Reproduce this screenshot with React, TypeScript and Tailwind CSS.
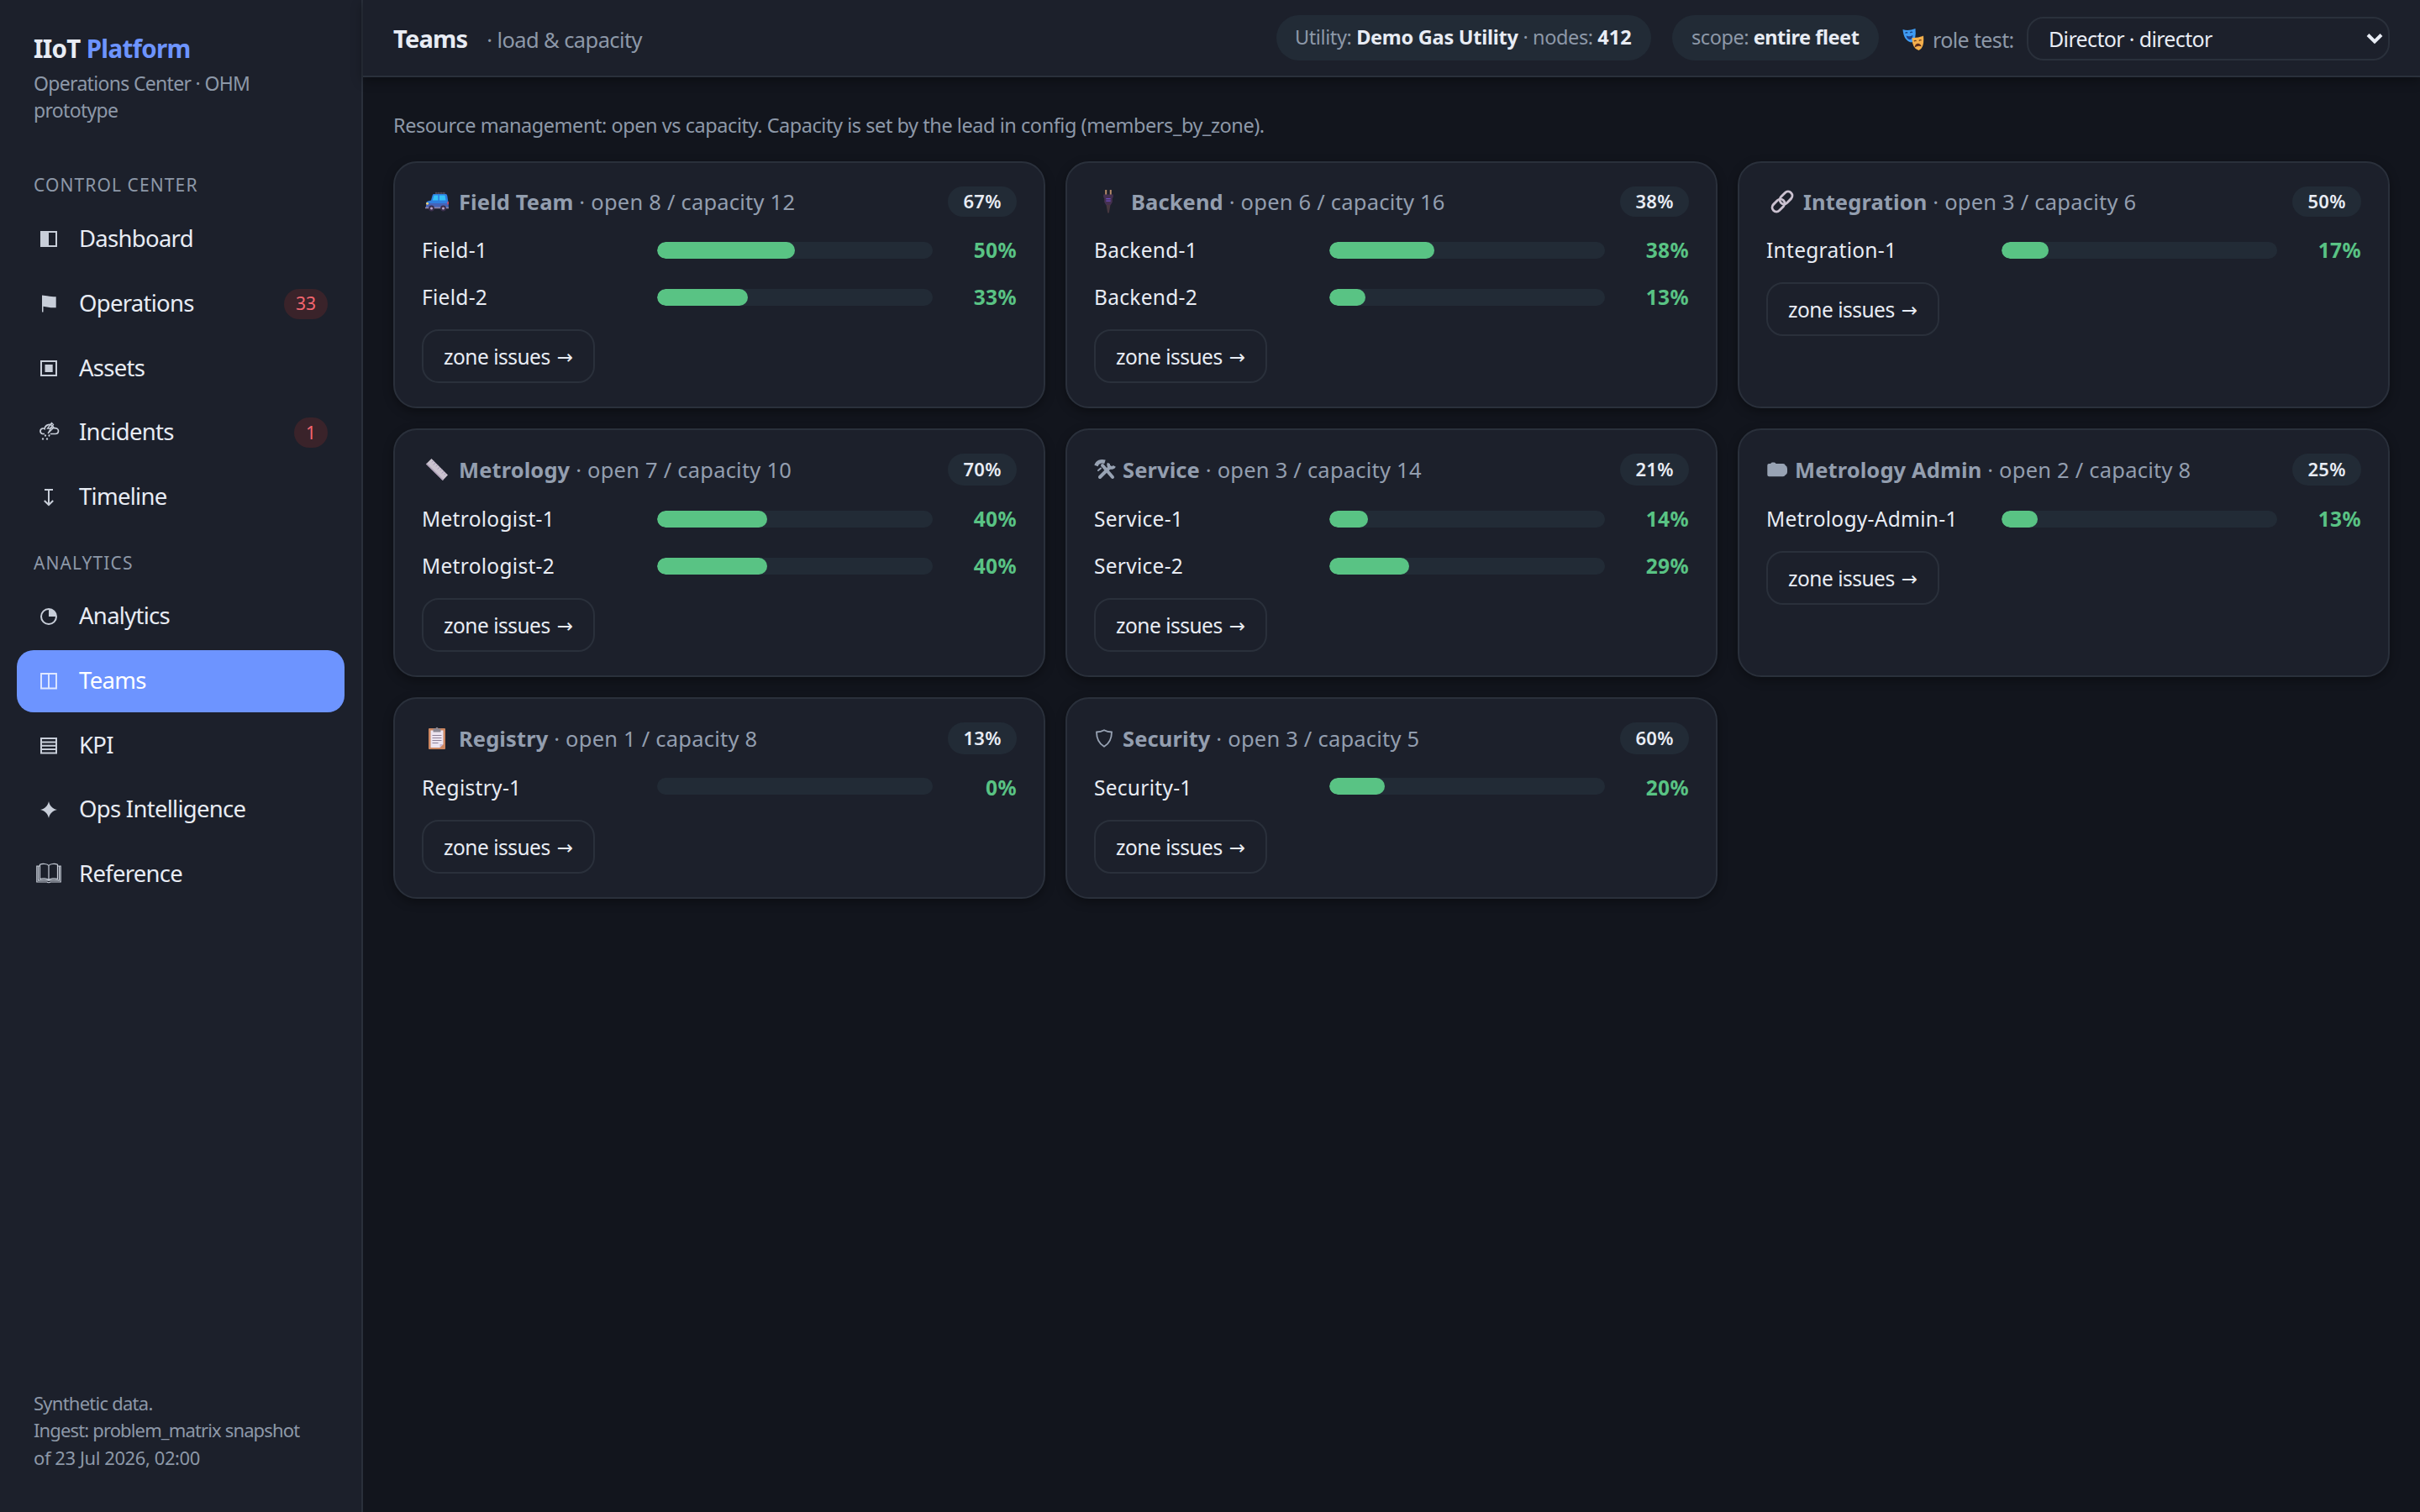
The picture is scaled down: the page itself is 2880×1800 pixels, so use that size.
import type { ReactNode } from "react";

type Member = { name: string; pct: number };
type Team = {
  icon: ReactNode;
  iconBox: string;
  name: string;
  stats: string;
  load: string;
  members: Member[];
  tall?: boolean;
  barClass?: string;
};

/* ---------- navigation icons ---------- */

const svg = "block h-8 w-8 overflow-visible";

const DashboardIcon = () => (
  <svg viewBox="0 0 32 32" className={svg} fill="currentColor">
    <path fillRule="evenodd" d="M6 6h20v19H6zM16 8v15h8V8z" />
  </svg>
);
const FlagIcon = () => (
  <svg viewBox="0 0 32 32" className={svg} fill="currentColor">
    <path d="M8 5.500l6 .8c4 .6 7 .9 10.700 1V20.300c-4 .2-7-.2-10.700-.9l-4.500-.6v6.600H8z" />
  </svg>
);
const AssetsIcon = () => (
  <svg viewBox="0 0 32 32" className={svg} fill="currentColor">
    <path fillRule="evenodd" d="M6 6h20v19H6zM8 8v15h16V8zM11.500 11h9.200v9h-9.200z" />
  </svg>
);
const StormIcon = () => (
  <svg viewBox="0 0 32 32" className={svg} fill="none" stroke="currentColor" strokeWidth="1.700">
    <path d="M11 17.500H8.500a3.300 3.300 0 0 1 0-6.400c1-.2 2 0 2.600.4a5.600 5.600 0 0 1 9.400-3.500l1.600 2.600c3.500-.4 5.400 1.200 5.400 3.500 0 2-1.600 3.400-3.700 3.400h-6" />
    <path d="M19.500 4.500l-5 6.500h4l-3.500 6 6.500-6.500h-3.500l3.500-4z" strokeWidth="1.300" />
    <path d="M12.500 18.500l-1 2M17 18.500l-1 2M9.500 22.500l-1 2M14.500 22.500l-1 2" strokeWidth="1.800" />
  </svg>
);
const TimelineIcon = () => (
  <svg viewBox="0 0 32 32" className={svg} fill="none" stroke="currentColor" strokeWidth="2">
    <path d="M11 7h10M16 7v18M10.800 20l5.200 5 5.200-5" />
  </svg>
);
const PieIcon = () => (
  <svg viewBox="0 0 32 32" className={svg}>
    <circle cx="16" cy="16" r="9" fill="none" stroke="currentColor" strokeWidth="2" />
    <path d="M16 16V7a9 9 0 0 1 9 9z" fill="currentColor" />
  </svg>
);
const ColumnsIcon = () => (
  <svg viewBox="0 0 32 32" className={svg} fill="none" stroke="currentColor" strokeWidth="1.900">
    <path d="M7 7h18v17.500H7zM16 7v17.500" />
  </svg>
);
const KpiIcon = () => (
  <svg viewBox="0 0 32 32" className={svg} fill="none" stroke="currentColor" strokeWidth="2">
    <path d="M7 7h18v17.500H7zM7 11.500h18M7 15.800h18M7 20.100h18" />
  </svg>
);
const SparkIcon = () => (
  <svg viewBox="0 0 32 32" className={svg} fill="currentColor">
    <path d="M16 6c1.200 5.500 4.500 8.800 10 10-5.500 1.200-8.800 4.500-10 10-1.200-5.500-4.500-8.800-10-10 5.500-1.200 8.800-4.500 10-10z" />
  </svg>
);
const BookIcon = () => (
  <svg viewBox="0 0 32 32" className={svg} fill="none" stroke="currentColor" strokeWidth="1.200">
    <path d="M16 5.500C14.500 3.300 8.500 2.800 5.500 4.200V21.500c3-1.200 9-.8 10.500 1.200 1.500-2 7.500-2.400 10.500-1.200V4.200C23.500 2.800 17.500 3.300 16 5.500zM16 5.500v17" />
    <path d="M5.500 6H1.800v19H14c.7 1 3.300 1 4 0h12.200V6h-3.700M3.500 6v17.200c4-.3 9-.5 12.500 0 3.500-.5 8.500-.3 12.500 0V6" />
  </svg>
);

/* ---------- team icons ---------- */

const CarIcon = () => (
  <svg viewBox="0 0 28 24" className="block h-6 w-7 overflow-visible">
    <path d="M12 2h12M13 .8v2M16 .8v2M19 .8v2M22 .8v2" stroke="#5a5566" strokeWidth="1" />
    <path d="M10 3h14.500q1.500 0 1.800 2l1.200 8v6H1v-5q0-2 2-2.500l4-1 1.500-5.500Q9 3 10 3z" fill="#2f7fe0" />
    <path d="M10.500 4.500h4.800v6H8.800zM17 4.500h6.500l1 6H17z" fill="#35c1f5" />
    <path d="M1 14h26.500v4.500H1z" fill="#4663b8" />
    <path d="M0 18.500h28v1.800H0z" fill="#8d7fa3" />
    <circle cx="2.600" cy="14.300" r="1.400" fill="#ffd66b" />
    <rect x="26.400" y="12" width="1.500" height="3.400" fill="#d8455f" />
    <circle cx="7.500" cy="20" r="3.400" fill="#3c2f4d" />
    <circle cx="7.500" cy="20" r="1.500" fill="#b9a7c9" />
    <circle cx="21.500" cy="20" r="3.400" fill="#3c2f4d" />
    <circle cx="21.500" cy="20" r="1.500" fill="#b9a7c9" />
  </svg>
);
const PlugIcon = () => (
  <svg viewBox="0 0 14 28" className="block h-7 w-3.5">
    <path d="M3.200 0h2v6h-2zM8.800 0h2v6h-2z" fill="#b58a68" />
    <path d="M1.200 5.500h11.600v3.500l-1 1v4.500L9.800 18H4.200l-2-3.500V10l-1-1z" fill="#44304f" />
    <path d="M4.500 18h5l-1 5.500-.7 4H6.200l-.7-4z" fill="#46373f" />
    <path d="M4.300 10h5.400v1.300H4.300zM4.300 12.500h5.400v1.300H4.300z" fill="#6d4bc0" />
  </svg>
);
const LinkIcon = () => (
  <svg viewBox="0 0 28 28" className="block h-7 w-7" fill="none" stroke="#cbc1d0" strokeWidth="2.900">
    <g transform="rotate(-45 14 14)">
      <rect x="-.8" y="9" width="16.800" height="10" rx="5" />
      <rect x="12" y="9" width="16.800" height="10" rx="5" />
    </g>
  </svg>
);
const RulerIcon = () => (
  <svg viewBox="0 0 28 28" className="block h-7 w-7">
    <path d="M7.500 1L27 20.500 20.800 27 1 7.500z" fill="#cbc3cf" />
    <path d="M1 7.500L20.800 27l1-1L2 6.500z" fill="#a99bb4" />
    <path d="M9.800 3.500L8 5.300M12.300 6l-2.500 2.500M14.800 8.500L13 10.300M17.300 11l-2.500 2.500M19.800 13.500L18 15.300M22.300 16l-2.500 2.500M24.500 18.500l-1.800 1.800" stroke="#a08fb5" strokeWidth="1" />
  </svg>
);
const ToolsIcon = () => (
  <svg viewBox="0 0 28 28" className="block h-7 w-7" fill="none" stroke="#98a3b4" strokeLinecap="round">
    <path d="M2.500 9.500C4 5 8 3.200 13 4.800" strokeWidth="4.600" strokeLinecap="butt" />
    <path d="M10 9l12 14" strokeWidth="4" />
    <path d="M19 11L7 23" strokeWidth="4" />
    <path d="M17.500 6.500a3.800 3.800 0 1 0 6.800 3.400" strokeWidth="3.600" strokeLinecap="butt" />
    <path d="M8 12.500l-3 2.500" strokeWidth="2" />
  </svg>
);
const FolderIcon = () => (
  <svg viewBox="0 0 26 20" className="block h-5 w-[26px]" fill="#98a3b4">
    <path d="M1.300 5Q1.300 3 3.200 3h2q.4-1.600 1.800-1.600h2.500Q11 1.400 11.500 3H20q2.200 0 2.800 2 2.200 1 2.200 4v4q0 3-2.500 3.800-.6 1.400-2.500 1.400H3.300q-2 0-2-2z" />
  </svg>
);
const ClipboardIcon = () => (
  <svg viewBox="0 0 22 28" className="block h-7 w-[22px]">
    <rect x="1" y="2" width="20" height="25" rx="1" fill="#cc8660" />
    <path d="M3.500 4.500h15V21l-4 4h-11z" fill="#ece4f1" />
    <path d="M18.500 21l-4 4v-4z" fill="#c9b8d4" />
    <path d="M5.500 10.500h11M5.500 13.500h11M5.500 16.500h11M5.500 19.500h7" stroke="#8f8299" strokeWidth="1.100" />
    <path d="M6.500 2.500h3q0-1.700 1.500-1.700t1.500 1.700h3v4h-9z" fill="#8a8793" />
  </svg>
);
const ShieldIcon = () => (
  <svg viewBox="0 0 24 24" className="block h-6 w-6" fill="none" stroke="#98a3b4" strokeWidth="1.800">
    <path d="M12 2.200c2.800 1.600 5.800 2.200 9 2.300 0 8.500-2.500 13.500-9 17.300C5.500 18 3 13 3 4.500c3.200-.1 6.200-.7 9-2.300z" />
  </svg>
);
const MasksIcon = () => (
  <svg viewBox="0 0 26 28" className="block h-7 w-[26px]">
    <path d="M.5 2q6 2.500 15-1 1.500 14-4.500 16.500Q1.500 16 .5 2z" fill="#3f9bf3" />
    <path d="M3.500 6.500q1.300-1.500 2.700-.3M9.300 6q1.300-1.500 2.700-.5" stroke="#163a78" strokeWidth="1.200" fill="none" />
    <path d="M4.500 9.500q4 2 8-.8-.6 5.300-3.500 5.500-3.300-.2-4.500-4.700z" fill="#1d3f86" />
    <path d="M11.500 12q7 .5 13.500-2.500 1.500 14.500-5.500 17.500-8-2-8-15z" fill="#f5b04c" />
    <path d="M13.800 16.200q1.300-1.600 2.800-.4M19.800 15.500q1.300-1.500 2.800-.6" stroke="#6b3a1d" strokeWidth="1.200" fill="none" />
    <path d="M14.500 23.500q.8-4.500 3.700-4.800 3.200-.2 4.500 3.600-4-1.600-8.200 1.200z" fill="#5c2c1c" />
  </svg>
);

/* ---------- data ---------- */

const wide = "w-11 pl-1";
const narrow = "w-[34px]";

const teams: Team[] = [
  { icon: <CarIcon />, iconBox: wide, name: "Field Team", stats: "open 8 / capacity 12", load: "67%", members: [{ name: "Field-1", pct: 50 }, { name: "Field-2", pct: 33 }] },
  { icon: <PlugIcon />, iconBox: "w-11 pl-[10px]", name: "Backend", stats: "open 6 / capacity 16", load: "38%", members: [{ name: "Backend-1", pct: 38 }, { name: "Backend-2", pct: 13 }] },
  { icon: <LinkIcon />, iconBox: "w-11 pl-[5px]", name: "Integration", stats: "open 3 / capacity 6", load: "50%", members: [{ name: "Integration-1", pct: 17 }] },
  { icon: <RulerIcon />, iconBox: wide, name: "Metrology", stats: "open 7 / capacity 10", load: "70%", members: [{ name: "Metrologist-1", pct: 40 }, { name: "Metrologist-2", pct: 40 }], tall: true },
  { icon: <ToolsIcon />, iconBox: narrow, name: "Service", stats: "open 3 / capacity 14", load: "21%", members: [{ name: "Service-1", pct: 14 }, { name: "Service-2", pct: 29 }], tall: true },
  { icon: <FolderIcon />, iconBox: narrow, name: "Metrology Admin", stats: "open 2 / capacity 8", load: "25%", members: [{ name: "Metrology-Admin-1", pct: 13 }], tall: true },
  { icon: <ClipboardIcon />, iconBox: "w-11 pl-[7px]", name: "Registry", stats: "open 1 / capacity 8", load: "13%", members: [{ name: "Registry-1", pct: 0 }], tall: true, barClass: "mb-1" },
  { icon: <ShieldIcon />, iconBox: narrow, name: "Security", stats: "open 3 / capacity 5", load: "60%", members: [{ name: "Security-1", pct: 20 }], tall: true, barClass: "mb-1" },
];

/* ---------- components ---------- */

function NavItem({ icon, label, badge, active }: { icon: ReactNode; label: string; badge?: string; active?: boolean }) {
  return (
    <a className={`flex h-[74px] items-center rounded-[20px] pl-[22px] pr-5 ${active ? "bg-[#6d94ff] text-white" : "text-[#e8ecf4]"}`}>
      <span className={active ? "text-[#e0e8ff]" : "text-[#c8ced9]"}>{icon}</span>
      <span className="flex-1 pb-0.5 pl-5 text-[27.5px] leading-9 tracking-[-0.72px]">{label}</span>
      {badge && (
        <span className="flex h-9 min-w-10 items-center justify-center rounded-full bg-[#3a232a] px-[14px] text-[21px] text-[#f2656f]">
          {badge}
        </span>
      )}
    </a>
  );
}

function TeamCard({ team }: { team: Team }) {
  return (
    <section className="flex flex-col items-start rounded-[28px] border-2 border-[#2a303b] bg-[#1c202b] px-8 pt-7 shadow-[0_4px_12px_rgba(0,0,0,0.35)]">
      <div className={`flex w-full items-center text-[25.5px] text-[#939eaf] ${team.tall ? "h-[38px]" : "h-9"}`}>
        <span className={`shrink-0 ${team.iconBox}`}>{team.icon}</span>
        <span className="flex-1 leading-9 tracking-[0.1px]">
          <b className="font-bold">{team.name}</b>
          <span className="tracking-[0.22px]"> · {team.stats}</span>
        </span>
        <span className="flex h-full items-center rounded-full bg-[#222b36] px-[18px] pb-px text-[22px] font-semibold tracking-[0.4px] text-[#e8ecf4]">
          {team.load}
        </span>
      </div>
      <div className="mt-3 flex w-full flex-col">
        {team.members.map((m) => (
          <div key={m.name} className="grid h-14 w-full grid-cols-[280px_328px_1fr] items-center text-[24.5px] leading-9">
            <span className="tracking-[0.28px] text-[#e8ecf4]">{m.name}</span>
            <span className={`flex h-5 overflow-hidden rounded-full bg-[#222b36] ${team.barClass ?? ""}`}>
              <span className="rounded-full bg-[#59c384]" style={{ width: `${m.pct}%` }} />
            </span>
            <span className="text-right font-bold tracking-[0.4px] text-[#59c384]">{m.pct}%</span>
          </div>
        ))}
      </div>
      <button className="mt-2.5 flex h-16 w-[206px] items-center whitespace-nowrap rounded-[20px] border-2 border-[#2a303b] pl-6 pt-0.5 text-[24.5px] leading-9 tracking-[-0.5px] text-[#e8ecf4]">
        zone issues
        <span className="pl-2 font-['DejaVu_Sans'] text-[23px]">→</span>
      </button>
    </section>
  );
}

export default function App() {
  return (
    <div className="flex h-[1800px] w-[2880px] overflow-hidden bg-[#12151d] font-['Noto_Sans',sans-serif]">
      <aside className="flex w-[432px] shrink-0 flex-col border-r-2 border-[#2a303b] bg-[#1c202b] px-5 pb-[49px] pt-10">
        <div className="px-5">
          <h1 className="text-[29.5px] font-bold leading-9 tracking-[-0.68px] text-[#e8ecf4]">
            IIoT <span className="text-[#6d94ff]">Platform</span>
          </h1>
          <p className="mt-[7px] text-[23px] leading-8 tracking-[-0.68px] text-[#8d98a8]">
            Operations Center · OHM
            <br />
            prototype
          </p>
        </div>

        <h2 className="mt-[58px] px-5 text-[21px] leading-[30px] tracking-[1.1px] text-[#8d98a8]">CONTROL CENTER</h2>
        <nav className="mt-[13px] flex flex-col gap-[2.75px]">
          <NavItem icon={<DashboardIcon />} label="Dashboard" />
          <NavItem icon={<FlagIcon />} label="Operations" badge="33" />
          <NavItem icon={<AssetsIcon />} label="Assets" />
          <NavItem icon={<StormIcon />} label="Incidents" badge="1" />
          <NavItem icon={<TimelineIcon />} label="Timeline" />
        </nav>

        <h2 className="mt-[26px] px-5 text-[21px] leading-[30px] tracking-[1.1px] text-[#8d98a8]">ANALYTICS</h2>
        <nav className="mt-3 flex flex-col gap-[2.75px]">
          <NavItem icon={<PieIcon />} label="Analytics" />
          <NavItem icon={<ColumnsIcon />} label="Teams" active />
          <NavItem icon={<KpiIcon />} label="KPI" />
          <NavItem icon={<SparkIcon />} label="Ops Intelligence" />
          <NavItem icon={<BookIcon />} label="Reference" />
        </nav>

        <footer className="mt-auto whitespace-nowrap px-5 text-[22px] leading-[32.400px] text-[#8d98a8]">
          <p className="tracking-[-0.75px]">Synthetic data.</p>
          <p className="tracking-[-0.86px]">Ingest: problem_matrix snapshot</p>
          <p className="tracking-[-0.42px]">of 23 Jul 2026, 02:00</p>
        </footer>
      </aside>

      <div className="flex flex-1 flex-col">
        <header className="flex h-[92px] shrink-0 items-center whitespace-nowrap border-b-2 border-[#2a303b] bg-[#1c202b] px-9 text-[#8d98a8] shadow-[0_4px_12px_rgba(0,0,0,0.35)]">
          <h2 className="pt-0.5 text-[29px] font-bold leading-9 tracking-[-0.8px] text-[#e8ecf4]">Teams</h2>
          <span className="pl-[23px] pt-[3px] text-[25.5px] leading-9 tracking-[-0.6px]">· load &amp; capacity</span>

          <div className="ml-auto flex items-center">
            <div className="flex h-[54px] w-[446px] items-center rounded-full bg-[#222b36] pl-[22px] text-[23.5px] tracking-[-0.4px]">
              <span>
                Utility: <b className="font-bold tracking-[-0.25px] text-[#e8ecf4]">Demo Gas Utility</b> · nodes: <b className="font-bold tracking-normal text-[#e8ecf4]">412</b>
              </span>
            </div>
            <div className="ml-[25px] flex h-[54px] w-[246px] items-center rounded-full bg-[#222b36] pl-[23px] text-[23.5px] tracking-[-0.45px]">
              <span>
                scope: <b className="font-bold text-[#e8ecf4]">entire fleet</b>
              </span>
            </div>
            <div className="ml-7 flex w-[148px] items-center pt-[3px]">
              <MasksIcon />
              <span className="pl-[10px] text-[25px] leading-9 tracking-[-0.62px]">role test:</span>
            </div>
            <div className="mt-0.5 flex h-[52px] w-[432px] items-center justify-between rounded-[20px] border-2 border-[#2a303b] pl-6 pr-1.5 text-[25px] leading-9 tracking-[-0.65px] text-[#e8ecf4]">
              Director · director
              <svg viewBox="0 0 20 14" className="h-3.5 w-5" fill="none" stroke="#e8ecf4" strokeWidth="4">
                <path d="M2 2.500l8 8 8-8" />
              </svg>
            </div>
          </div>
        </header>

        <main className="px-9 pt-[41px]">
          <p className="text-[23.5px] leading-8 tracking-[-0.45px] text-[#8d98a8]">
            Resource management: open vs capacity. Capacity is set by the lead in config (members_by_zone).
          </p>
          <div className="mt-[27px] grid grid-cols-3 grid-rows-[294px_296px_240px] gap-6">
            {teams.map((t) => (
              <TeamCard key={t.name} team={t} />
            ))}
          </div>
        </main>
      </div>
    </div>
  );
}
